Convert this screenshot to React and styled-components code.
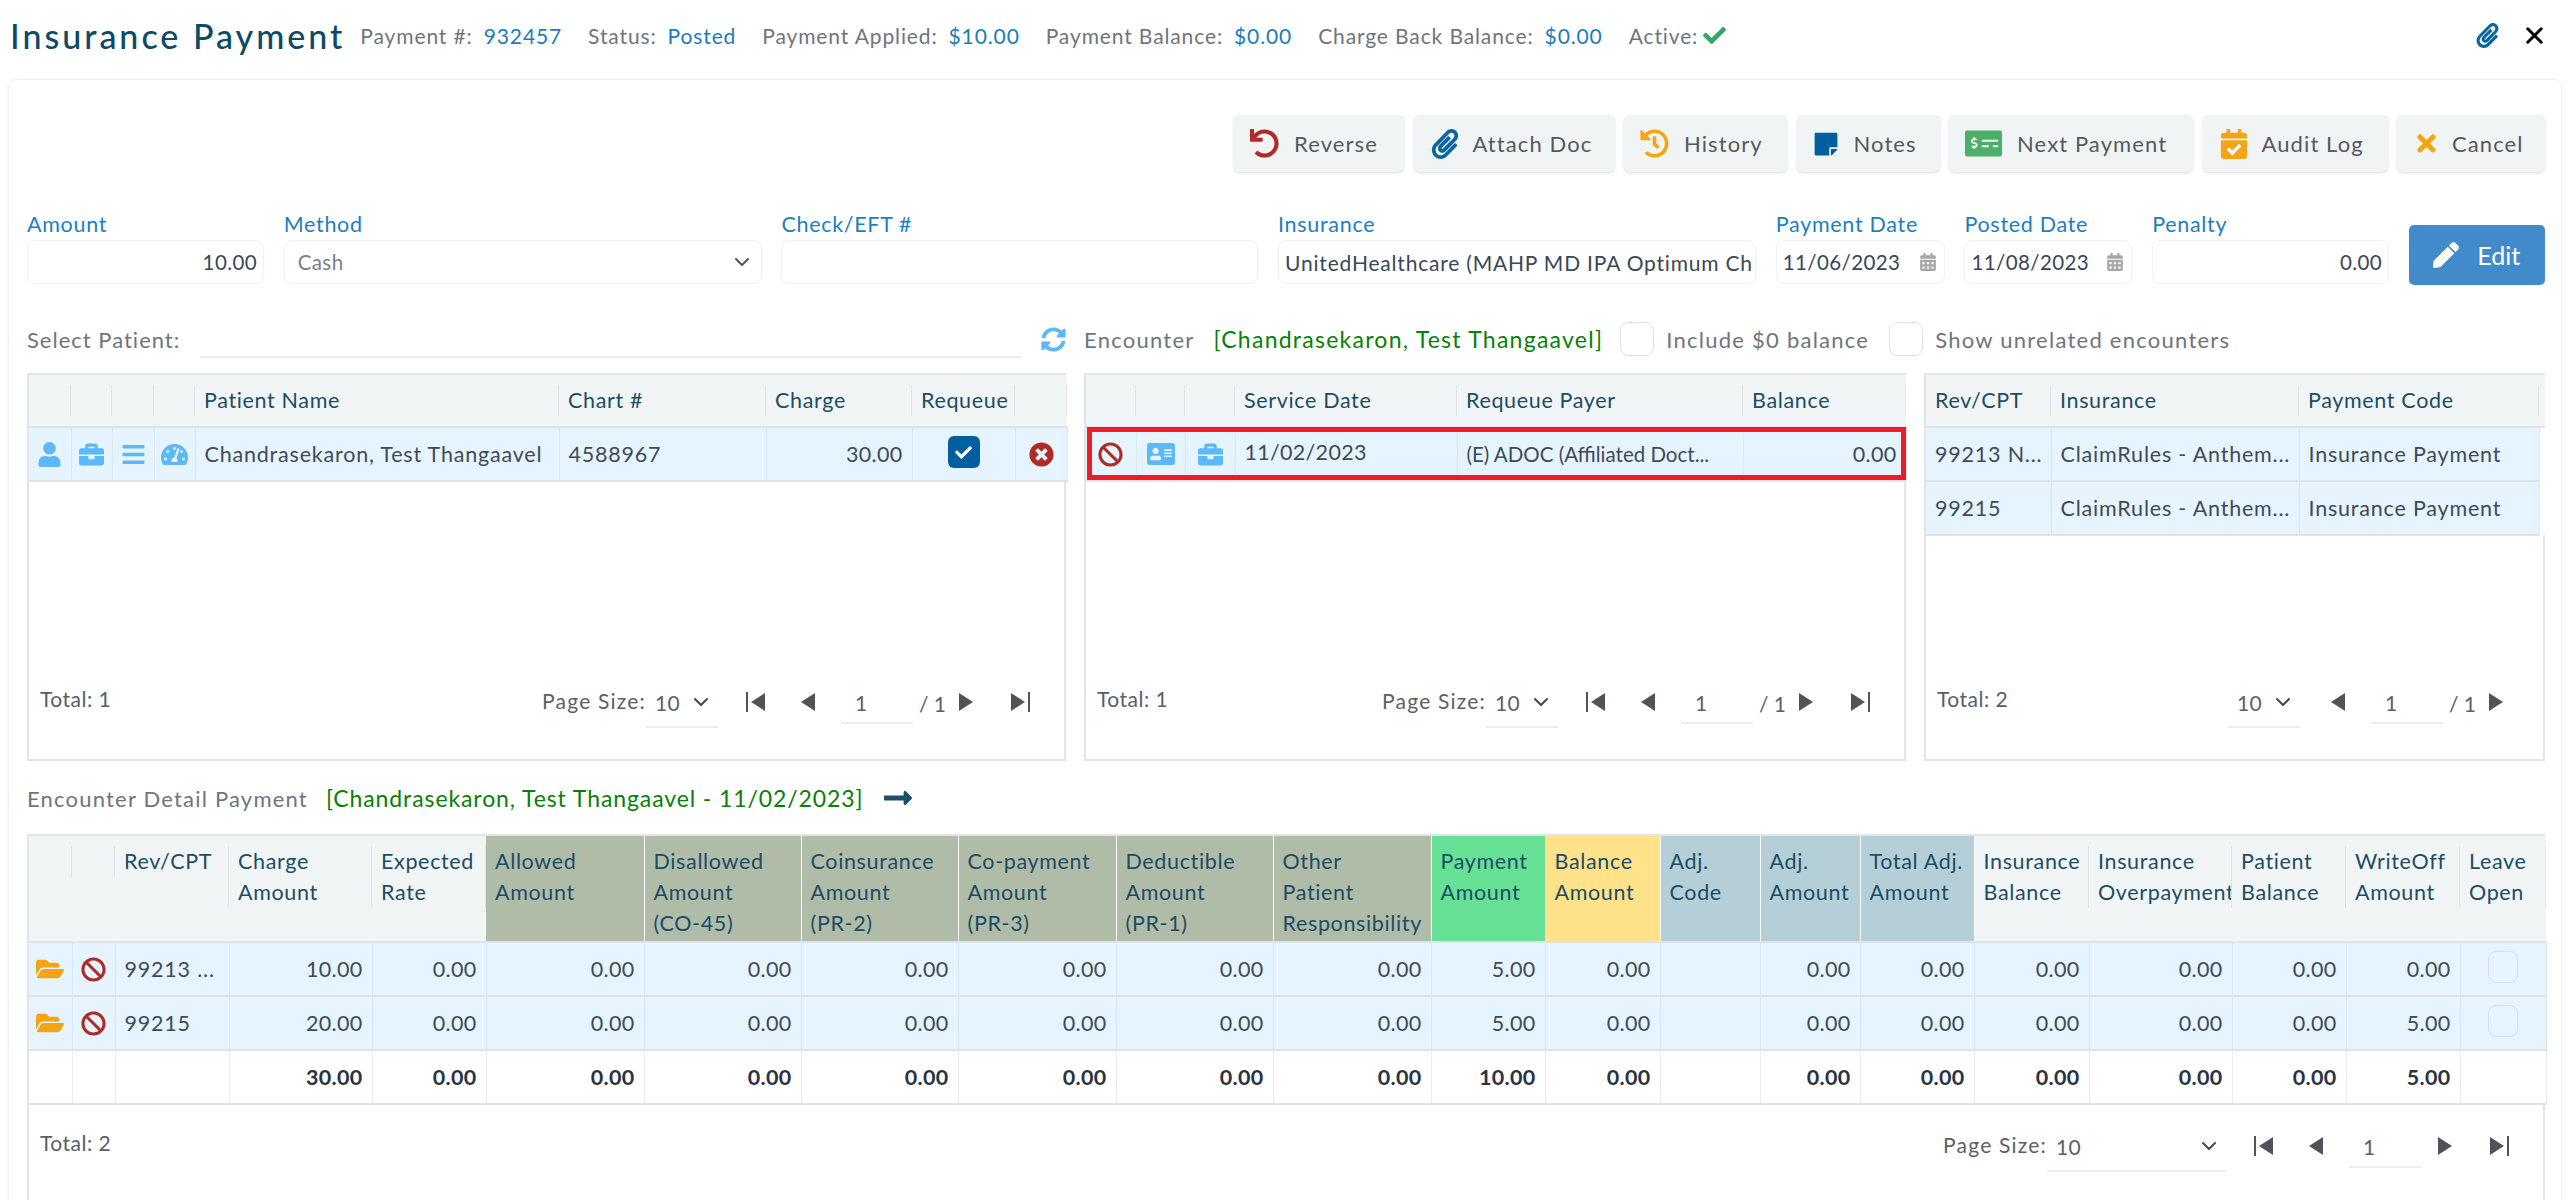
import { createGlobalStyle, styled } from "styled-components";
import {
  FaAddressCard,
  FaBan,
  FaBars,
  FaBriefcase,
  FaCalendarAlt,
  FaCalendarCheck,
  FaCheck,
  FaFolderOpen,
  FaHistory,
  FaLongArrowAltRight,
  FaMoneyCheckAlt,
  FaPaperclip,
  FaPen,
  FaStickyNote,
  FaSyncAlt,
  FaTachometerAlt,
  FaTimes,
  FaTimesCircle,
  FaUndo,
  FaUser,
} from "react-icons/fa";
import { LuChevronDown, LuX } from "react-icons/lu";

const GlobalStyle = createGlobalStyle`
  html, body {
    margin: 0;
    height: 1200px;
    overflow: hidden;
    background: #fff;
  }
  body {
    font-family: Lato, "Noto Sans", sans-serif;
    font-size: 22px;
    letter-spacing: 1px;
    color: #3a4757;
  }
  * { box-sizing: border-box; }
`;

const TopBar = styled.header`
  display: flex;
  align-items: center;
  height: 79px;
  padding: 0 26px 9px 10px;
`;

const Title = styled.h1`
  margin: 0 15px 0 0;
  font-size: 34px;
  font-weight: 500;
  letter-spacing: 3px;
  color: #0c4a68;
`;

const MetaList = styled.div`
  display: flex;
  align-items: center;
  gap: 26px;
  flex: 1;
`;

const MetaItem = styled.span`
  display: flex;
  align-items: center;
  gap: 11px;
  font-size: 21px;
  letter-spacing: 0.88px;
  color: #6f757b;
  b {
    font-weight: 400;
    color: #1b7cba;
  }
  svg {
    margin-left: -6px;
    font-size: 23px;
    color: #2fa866;
  }
`;

const TopIcons = styled.div`
  display: flex;
  align-items: center;
  gap: 21px;
  svg:first-child { color: #0a66a0; font-size: 25px; }
  svg:last-child { color: #000; font-size: 27px; }
`;

const Card = styled.main`
  margin: 0 12px 0 8px;
  padding: 35px 16px 0 18px;
  height: 1200px;
  border: 1px solid #f1f1f1;
  border-radius: 8px;
  box-shadow: 0 0 4px rgba(0, 0, 0, 0.04);
`;

const Toolbar = styled.div`
  display: flex;
  justify-content: flex-end;
  gap: 9.5px;
`;

const ToolButton = styled.button`
  display: flex;
  align-items: center;
  gap: ${(p) => p.$gap || 15}px;
  width: ${(p) => p.$w}px;
  height: 57px;
  padding: 0 0 0 16px;
  border: 0;
  border-radius: 6px;
  background: #f1f4f5;
  box-shadow: 0 1px 3px rgba(0, 0, 0, 0.14);
  font: inherit;
  letter-spacing: 1.1px;
  color: #55595c;
  white-space: nowrap;
  svg {
    flex: none;
    font-size: ${(p) => p.$size || 29}px;
    color: ${(p) => p.$color};
  }
`;

const FormRow = styled.div`
  display: grid;
  grid-template-columns: 237px 478px 477px 478px 169px 168px 237px 136px;
  column-gap: 19.7px;
  align-items: end;
  margin-top: 38px;
`;

const Field = styled.label`
  display: block;
`;

const FieldLabel = styled.span`
  display: block;
  height: 30px;
  line-height: 28px;
  font-size: 21.5px;
  letter-spacing: 0.7px;
  color: #1c7fc0;
`;

const FieldBox = styled.div`
  display: flex;
  align-items: center;
  justify-content: ${(p) => (p.$end ? "flex-end" : "space-between")};
  height: 44px;
  padding: 0 ${(p) => (p.$end ? 6 : 7)}px 0 ${(p) => p.$left || 6}px;
  border: 1px solid #f1f1f1;
  border-radius: 8px;
  white-space: nowrap;
  overflow: hidden;
  font-size: ${(p) => (p.$wide ? 21 : 20.5)}px;
  letter-spacing: ${(p) => (p.$wide ? 0.8 : 0.4)}px;
  color: ${(p) => p.$color || "#3a4757"};
  svg { flex: none; color: #a8a8a8; font-size: 18px; }
`;

const EditButton = styled.button`
  display: flex;
  align-items: center;
  justify-content: center;
  gap: 18px;
  height: 60px;
  margin-bottom: -1px;
  border: 0;
  border-radius: 5px;
  background: #428bca;
  font: inherit;
  font-size: 25px;
  color: #fff;
  svg { font-size: 26px; }
`;

const SelectRow = styled.div`
  display: grid;
  grid-template-columns: 1039px 1fr;
  column-gap: 18px;
  align-items: center;
  height: 38px;
  margin-top: 36px;
`;

const RowLeft = styled.div`
  display: flex;
  align-items: center;
  gap: 20px;
  color: #6f757b;
  svg { flex: none; margin-left: -1px; font-size: 25px; color: #5cb8f7; }
`;

const LineInput = styled.div`
  flex: 1;
  height: 38px;
  border-bottom: 2px solid #ededed;
`;

const RowRight = styled.div`
  display: flex;
  align-items: center;
  letter-spacing: 1.25px;
  color: #6f757b;
`;

const GreenText = styled.span`
  margin-left: ${(p) => p.$gap}px;
  font-size: 23px;
  letter-spacing: ${(p) => p.$spacing}px;
  color: #078007;
`;

const CheckBox = styled.span`
  flex: none;
  display: block;
  width: 34px;
  height: 34px;
  margin: ${(p) => p.$margin || "0"};
  border: 1px solid #dee2e6;
  border-radius: 8px;
  background: transparent;
`;

const TablesRow = styled.div`
  display: grid;
  grid-template-columns: 1039px 822px 621px;
  column-gap: 18px;
  margin-top: 15px;
`;

const TableBox = styled.section`
  position: relative;
  display: flex;
  flex-direction: column;
  height: ${(p) => p.$height}px;
  border: 2px solid #e2e5e7;
`;

const RedFrame = styled.div`
  position: absolute;
  top: 52px;
  left: 1px;
  right: -2px;
  height: 53px;
  border: 5px solid #ee1c25;
`;

const Table = styled.table`
  width: 100%;
  table-layout: fixed;
  border-collapse: collapse;
`;

const Th = styled.th`
  height: ${(p) => p.$height}px;
  padding: ${(p) => (p.$tone ? "10px 0 0 9px" : "10px 0 0")};
  background: ${(p) => p.$tone || "#f1f5f6"};
  border-bottom: 2px solid #dfe3e5;
  border-right: ${(p) => (p.$tone ? "1px solid rgba(255,255,255,0.22)" : "0")};
  vertical-align: top;
  text-align: left;
  font-weight: 400;
  font-size: 21.5px;
  letter-spacing: 0.65px;
  line-height: 31px;
  color: #1a4d66;
  white-space: nowrap;
  overflow: hidden;
`;

const ThText = styled.div`
  min-height: ${(p) => p.$min || 31}px;
  padding: 0 0 0 9px;
  border-right: 1px solid #dde3e6;
  white-space: pre-line;
  overflow: hidden;
`;

const Td = styled.td`
  height: 54px;
  padding: ${(p) => (p.$icon ? "0" : "0 9px")};
  background: ${(p) => (p.$plain ? "#fff" : "#e5f4fe")};
  border-right: 1px solid ${(p) => (p.$plain ? "#e9eced" : "#dce8f0")};
  border-bottom: 2px solid #dfe3e5;
  text-align: ${(p) => (p.$icon ? "center" : p.$right ? "right" : "left")};
  font-weight: ${(p) => (p.$bold ? 700 : 400)};
  font-size: ${(p) => (p.$tight ? 20.5 : 21.5)}px;
  letter-spacing: ${(p) => (p.$tight ? 0 : p.$right ? 0.3 : 0.8)}px;
  color: ${(p) => (p.$bold ? "#2a3344" : "#3f4a59")};
  white-space: nowrap;
  overflow: hidden;
  svg { display: block; margin: 0 auto; font-size: ${(p) => p.$size || 25}px; color: ${(p) => p.$color || "#5cb8f7"}; }
`;

const BlankTd = styled.td`
  background: #fff;
`;

const RaisedText = styled.span`
  display: block;
  margin-top: -5px;
  letter-spacing: 0.3px;
`;

const CheckedBox = styled.span`
  display: flex;
  align-items: center;
  justify-content: center;
  width: 32px;
  height: 32px;
  margin: -4px auto 0;
  border-radius: 6px;
  background: #005f9e;
  svg { font-size: 17px; color: #fff; margin: 0; }
`;

const RowCheck = styled(CheckBox)`
  width: 30px;
  height: 32px;
  margin: -4px auto 0;
  border-color: #d5e0e8;
`;

const Footer = styled.footer`
  display: flex;
  align-items: flex-start;
  justify-content: space-between;
  margin-top: ${(p) => p.$top || "auto"};
  padding: 0 ${(p) => p.$right || 34}px 31px 11px;
`;

const Total = styled.span`
  line-height: 38px;
  font-size: 21px;
  letter-spacing: 0.5px;
  color: #56606a;
`;

const Pager = styled.div`
  display: flex;
  align-items: flex-start;
`;

const PagerLabel = styled.span`
  line-height: 42px;
  color: #5b6166;
  font-size: 21px;
  letter-spacing: 1.2px;
`;

const PagerSelect = styled.div`
  display: flex;
  align-items: center;
  justify-content: space-between;
  width: ${(p) => p.$w}px;
  height: 48px;
  padding: 4px 5px 6px 9px;
  border-bottom: 2px solid #ececec;
  font-size: 21px;
  letter-spacing: 0.3px;
  color: #5b6166;
  svg { font-size: 24px; color: #44494d; }
`;

const PagerButton = styled.span`
  display: flex;
  align-items: center;
  height: 44px;
  margin-left: ${(p) => p.$gap}px;
  color: #505458;
`;

const PageInput = styled.div`
  width: 72px;
  height: 44px;
  margin-left: 26px;
  padding: 4px 0 0 14px;
  line-height: 38px;
  border-bottom: 2px solid #ececec;
  font-size: 21px;
  color: #5b6166;
`;

const PageCount = styled.span`
  width: 23px;
  margin-left: 6px;
  line-height: 48px;
  font-size: 21px;
  letter-spacing: 0;
  white-space: nowrap;
  color: #5b6166;
`;

const DetailHead = styled.div`
  display: flex;
  align-items: center;
  height: 30px;
  margin-top: 22px;
  letter-spacing: 1.2px;
  color: #6f757b;
  svg { margin-left: 18px; font-size: 32px; color: #1f4e6b; }
`;

const DetailBox = styled.div`
  margin-top: 21px;
`;

const PrevIcon = () => (
  <svg width="14" height="18" viewBox="0 0 14 18" fill="currentColor">
    <path d="M14 0 V18 L0 9 Z" />
  </svg>
);

const NextIcon = () => (
  <svg width="14" height="18" viewBox="0 0 14 18" fill="currentColor">
    <path d="M0 0 V18 L14 9 Z" />
  </svg>
);

const FirstIcon = () => (
  <svg width="20" height="20" viewBox="0 0 20 20" fill="currentColor">
    <rect x="0" y="0" width="2" height="20" />
    <path d="M19 1 V19 L5 10 Z" />
  </svg>
);

const LastIcon = () => (
  <svg width="20" height="20" viewBox="0 0 20 20" fill="currentColor">
    <rect x="18" y="0" width="2" height="20" />
    <path d="M1 1 V19 L15 10 Z" />
  </svg>
);

const Pagination = ({ label, selectWidth = 72, edges = true, count = true }) => (
  <Pager>
    {label && <PagerLabel>Page Size:</PagerLabel>}
    <PagerSelect $w={selectWidth}>
      10
      <LuChevronDown />
    </PagerSelect>
    {edges && (
      <PagerButton $gap={28}>
        <FirstIcon />
      </PagerButton>
    )}
    <PagerButton $gap={edges ? 35 : 31}>
      <PrevIcon />
    </PagerButton>
    <PageInput>1</PageInput>
    {count && <PageCount>/ 1</PageCount>}
    <PagerButton $gap={17}>
      <NextIcon />
    </PagerButton>
    {edges && (
      <PagerButton $gap={37}>
        <LastIcon />
      </PagerButton>
    )}
  </Pager>
);

const Cols = ({ widths }) => (
  <colgroup>
    {widths.map((w, i) => (
      <col key={i} style={{ width: w }} />
    ))}
  </colgroup>
);

const HeadRow = ({ labels, height = 52 }) => (
  <tr>
    {labels.map((l, i) => (
      <Th key={i} $height={height}>
        <ThText>{l || " "}</ThText>
      </Th>
    ))}
  </tr>
);

const ALLOWED = "#b0bba8";
const ADJ = "#b5cfd8";
const detailWidths = [43, 43, 114, 143, 114, 158, 157, 157, 158, 157, 158, 114, 115, 100, 100, 114, 115, 143, 114, 114, 86];
const detailHead = [
  { t: "" },
  { t: "" },
  { t: "Rev/CPT" },
  { t: "Charge\nAmount" },
  { t: "Expected\nRate" },
  { t: "Allowed\nAmount", tone: ALLOWED },
  { t: "Disallowed\nAmount\n(CO-45)", tone: ALLOWED },
  { t: "Coinsurance\nAmount\n(PR-2)", tone: ALLOWED },
  { t: "Co-payment\nAmount\n(PR-3)", tone: ALLOWED },
  { t: "Deductible\nAmount\n(PR-1)", tone: ALLOWED },
  { t: "Other\nPatient\nResponsibility", tone: ALLOWED },
  { t: "Payment\nAmount", tone: "#66e095" },
  { t: "Balance\nAmount", tone: "#ffe28a" },
  { t: "Adj.\nCode", tone: ADJ },
  { t: "Adj.\nAmount", tone: ADJ },
  { t: "Total Adj.\nAmount", tone: ADJ },
  { t: "Insurance\nBalance" },
  { t: "Insurance\nOverpayment" },
  { t: "Patient\nBalance" },
  { t: "WriteOff\nAmount" },
  { t: "Leave\nOpen" },
];

const DetailRow = ({ cpt, charge, writeOff }) => (
  <tr>
    <Td $icon $color="#f5a416" $size={28}><FaFolderOpen /></Td>
    <Td $icon $color="#b02a26" $size={25}><FaBan /></Td>
    <Td>{cpt}</Td>
    <Td $right>{charge}</Td>
    {["0.00", "0.00", "0.00", "0.00", "0.00", "0.00", "0.00", "5.00", "0.00"].map((v, i) => (
      <Td key={i} $right>{v}</Td>
    ))}
    <Td />
    {["0.00", "0.00", "0.00", "0.00", "0.00"].map((v, i) => (
      <Td key={i} $right>{v}</Td>
    ))}
    <Td $right>{writeOff}</Td>
    <Td $icon><RowCheck /></Td>
  </tr>
);

export default function App() {
  return (
    <>
      <GlobalStyle />
      <TopBar>
        <Title>Insurance Payment</Title>
        <MetaList>
          <MetaItem>Payment #: <b>932457</b></MetaItem>
          <MetaItem>Status: <b>Posted</b></MetaItem>
          <MetaItem>Payment Applied: <b>$10.00</b></MetaItem>
          <MetaItem>Payment Balance: <b>$0.00</b></MetaItem>
          <MetaItem>Charge Back Balance: <b>$0.00</b></MetaItem>
          <MetaItem>Active:<FaCheck /></MetaItem>
        </MetaList>
        <TopIcons>
          <FaPaperclip />
          <LuX strokeWidth={2.6} />
        </TopIcons>
      </TopBar>

      <Card>
        <Toolbar>
          <ToolButton $w={170} $color="#b12a25"><FaUndo />Reverse</ToolButton>
          <ToolButton $w={201} $color="#0a66a0" $size={30} $gap={13}><FaPaperclip />Attach Doc</ToolButton>
          <ToolButton $w={163} $color="#f5a416"><FaHistory />History</ToolButton>
          <ToolButton $w={143} $color="#005f9e" $size={26}><FaStickyNote />Notes</ToolButton>
          <ToolButton $w={244} $color="#4caf68" $size={37}><FaMoneyCheckAlt />Next Payment</ToolButton>
          <ToolButton $w={185} $color="#f5a416" $size={30} $gap={13}><FaCalendarCheck />Audit Log</ToolButton>
          <ToolButton $w={148} $color="#f5a416" $size={27} $gap={12}><FaTimes />Cancel</ToolButton>
        </Toolbar>

        <FormRow>
          <Field>
            <FieldLabel>Amount</FieldLabel>
            <FieldBox $end>10.00</FieldBox>
          </Field>
          <Field>
            <FieldLabel>Method</FieldLabel>
            <FieldBox $left={13} $color="#7b8084">Cash<LuChevronDown style={{ color: "#555", fontSize: 24 }} /></FieldBox>
          </Field>
          <Field>
            <FieldLabel>Check/EFT #</FieldLabel>
            <FieldBox />
          </Field>
          <Field>
            <FieldLabel>Insurance</FieldLabel>
            <FieldBox $wide>UnitedHealthcare (MAHP MD IPA Optimum Ch</FieldBox>
          </Field>
          <Field>
            <FieldLabel>Payment Date</FieldLabel>
            <FieldBox>11/06/2023<FaCalendarAlt /></FieldBox>
          </Field>
          <Field>
            <FieldLabel>Posted Date</FieldLabel>
            <FieldBox>11/08/2023<FaCalendarAlt /></FieldBox>
          </Field>
          <Field>
            <FieldLabel>Penalty</FieldLabel>
            <FieldBox $end>0.00</FieldBox>
          </Field>
          <EditButton><FaPen />Edit</EditButton>
        </FormRow>

        <SelectRow>
          <RowLeft>
            Select Patient:
            <LineInput />
            <FaSyncAlt />
          </RowLeft>
          <RowRight>
            Encounter
            <GreenText $gap={19} $spacing={1.25}>[Chandrasekaron, Test Thangaavel]</GreenText>
            <CheckBox $margin="0 12px 0 17px" />
            Include $0 balance
            <CheckBox $margin="0 12px 0 20px" />
            Show unrelated encounters
          </RowRight>
        </SelectRow>

        <TablesRow>
          <TableBox $height={388}>
            <Table>
              <Cols widths={[42, 41, 42, 41, 364, 207, 146, 103, 52]} />
              <thead>
                <HeadRow labels={["", "", "", "", "Patient Name", "Chart #", "Charge", "Requeue", ""]} />
              </thead>
              <tbody>
                <tr>
                  <Td $icon><FaUser /></Td>
                  <Td $icon><FaBriefcase /></Td>
                  <Td $icon><FaBars /></Td>
                  <Td $icon $size={27}><FaTachometerAlt /></Td>
                  <Td>Chandrasekaron, Test Thangaavel</Td>
                  <Td>4588967</Td>
                  <Td $right>30.00</Td>
                  <Td $icon><CheckedBox><FaCheck /></CheckedBox></Td>
                  <Td $icon $color="#b02a26"><FaTimesCircle /></Td>
                </tr>
              </tbody>
            </Table>
            <Footer>
              <Total>Total: 1</Total>
              <Pagination label />
            </Footer>
          </TableBox>

          <TableBox $height={388}>
            <Table>
              <Cols widths={[50, 49, 50, 222, 286, 163]} />
              <thead>
                <HeadRow labels={["", "", "", "Service Date", "Requeue Payer", "Balance"]} />
              </thead>
              <tbody>
                <tr>
                  <Td $icon $color="#b02a26"><FaBan /></Td>
                  <Td $icon $size={28}><FaAddressCard /></Td>
                  <Td $icon><FaBriefcase /></Td>
                  <Td><RaisedText>11/02/2023</RaisedText></Td>
                  <Td $tight>(E) ADOC (Affiliated Doct...</Td>
                  <Td $right>0.00</Td>
                </tr>
              </tbody>
            </Table>
            <RedFrame />
            <Footer>
              <Total>Total: 1</Total>
              <Pagination label />
            </Footer>
          </TableBox>

          <TableBox $height={388}>
            <Table>
              <Cols widths={[125, 248, 240, 6]} />
              <thead>
                <HeadRow labels={["Rev/CPT", "Insurance", "Payment Code", ""]} />
              </thead>
              <tbody>
                <tr>
                  <Td>99213 N...</Td>
                  <Td>ClaimRules - Anthem...</Td>
                  <Td>Insurance Payment</Td>
                  <BlankTd />
                </tr>
                <tr>
                  <Td>99215</Td>
                  <Td>ClaimRules - Anthem...</Td>
                  <Td>Insurance Payment</Td>
                  <BlankTd />
                </tr>
              </tbody>
            </Table>
            <Footer $right={40}>
              <Total>Total: 2</Total>
              <Pagination edges={false} />
            </Footer>
          </TableBox>
        </TablesRow>

        <DetailHead>
          Encounter Detail Payment
          <GreenText $gap={18} $spacing={0.9}>[Chandrasekaron, Test Thangaavel - 11/02/2023]</GreenText>
          <FaLongArrowAltRight />
        </DetailHead>

        <DetailBox>
          <TableBox $height={400}>
            <Table>
              <Cols widths={detailWidths} />
              <thead>
                <tr>
                  {detailHead.map((c, i) => (
                    <Th key={i} $height={106} $tone={c.tone}>
                      {c.tone ? c.t.split("\n").map((l) => <div key={l}>{l}</div>) : <ThText $min={c.t ? 62 : 31}>{c.t}</ThText>}
                    </Th>
                  ))}
                </tr>
              </thead>
              <tbody>
                <DetailRow cpt="99213 ..." charge="10.00" writeOff="0.00" />
                <DetailRow cpt="99215" charge="20.00" writeOff="5.00" />
                <tr>
                  <Td $plain />
                  <Td $plain />
                  <Td $plain />
                  {["30.00", "0.00", "0.00", "0.00", "0.00", "0.00", "0.00", "0.00", "10.00", "0.00"].map((v, i) => (
                    <Td key={i} $plain $right $bold>{v}</Td>
                  ))}
                  <Td $plain />
                  {["0.00", "0.00", "0.00", "0.00", "0.00", "5.00"].map((v, i) => (
                    <Td key={i} $plain $right $bold>{v}</Td>
                  ))}
                  <Td $plain />
                </tr>
              </tbody>
            </Table>
            <Footer $top="19px">
              <Total>Total: 2</Total>
              <Pagination label selectWidth={179} count={false} />
            </Footer>
          </TableBox>
        </DetailBox>
      </Card>
    </>
  );
}
